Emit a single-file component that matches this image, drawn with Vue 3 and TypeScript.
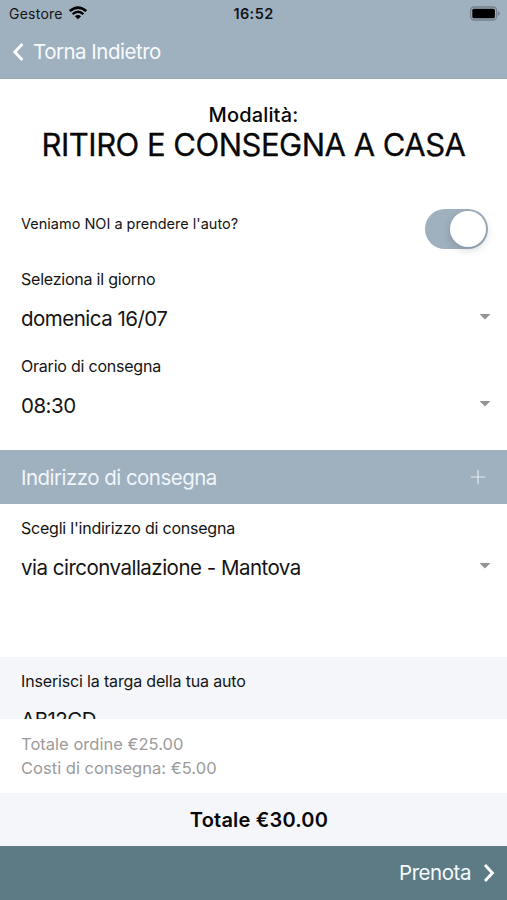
<script setup lang="ts">
import { ref } from 'vue'

interface SelectField {
  id: string
  label: string
  value: string
}

const pickup = ref(true)
const schedule: SelectField[] = [
  { id: 'day', label: 'Seleziona il giorno', value: 'domenica 16/07' },
  { id: 'time', label: 'Orario di consegna', value: '08:30' },
]
const address: SelectField = {
  id: 'address',
  label: "Scegli l'indirizzo di consegna",
  value: 'via circonvallazione - Mantova',
}
const plate = 'AB12CD'
</script>

<template>
  <div class="screen">
    <header class="header">
      <div class="status">
        <div class="carrier">
          <span class="carrier-name">Gestore</span>
          <svg class="wifi" viewBox="0 0 18 14" aria-hidden="true">
            <path d="M.8 5.1Q9-2 17.2 5.1" fill="none" stroke="#000" stroke-width="2.6" />
            <path d="M3.6 8.1Q9 3.5 14.4 8.1" fill="none" stroke="#000" stroke-width="2.3" />
            <path d="M5.9 10.2Q9 7.7 12.1 10.2L9 13.3Z" />
          </svg>
        </div>
        <span class="clock">16:52</span>
        <svg class="battery" viewBox="0 0 31 16" aria-hidden="true">
          <rect x="1.6" y="1" width="26" height="13" rx="3.5" fill="none" stroke="#73808b" stroke-width="1.3" />
          <rect x="3.3" y="2.7" width="22.6" height="9.6" rx="1.6" />
          <path d="M29 5.3q1.8.8 1.8 2.2t-1.8 2.2z" fill="#73808b" />
        </svg>
      </div>
      <button class="back" type="button">
        <svg class="back-icon" viewBox="0 0 12 20" aria-hidden="true">
          <path d="M10.4 2 2.8 10 10.4 18" fill="none" stroke="#fff" stroke-width="2.9" />
        </svg>
        <span class="back-text">Torna Indietro</span>
      </button>
    </header>

    <main class="content">
      <div class="mode">
        <div class="mode-label">Modalità:</div>
        <h1 class="mode-name">RITIRO E CONSEGNA A CASA</h1>
      </div>

      <div class="toggle-row">
        <span class="question">Veniamo NOI a prendere l'auto?</span>
        <button
          class="toggle"
          :class="{ on: pickup }"
          type="button"
          role="switch"
          :aria-checked="pickup"
          @click="pickup = !pickup"
        >
          <span class="knob"></span>
        </button>
      </div>

      <div v-for="f in schedule" :key="f.id" class="field">
        <div class="label">{{ f.label }}</div>
        <div class="value-row">
          <span class="value">{{ f.value }}</span>
          <span class="caret"></span>
        </div>
      </div>

      <div class="section-bar">
        <span class="section-text">Indirizzo di consegna</span>
        <svg class="plus" viewBox="0 0 16 16" aria-hidden="true">
          <path d="M8 .8V15.2M.8 8H15.2" stroke="#e0eaf1" stroke-width="1.2" />
        </svg>
      </div>

      <div class="field address-field">
        <div class="label">{{ address.label }}</div>
        <div class="value-row">
          <span class="value">{{ address.value }}</span>
          <span class="caret"></span>
        </div>
      </div>

      <div class="plate">
        <div class="label plate-label">Inserisci la targa della tua auto</div>
        <div class="value plate-value">{{ plate }}</div>
      </div>
    </main>

    <footer class="footer">
      <div class="costs">
        <div class="order">Totale ordine €25.00</div>
        <div class="delivery">Costi di consegna: €5.00</div>
      </div>
      <div class="total"><span class="total-text">Totale €30.00</span></div>
      <button class="book" type="button">
        <span class="book-text">Prenota</span>
        <svg class="book-icon" viewBox="0 0 12 20" aria-hidden="true">
          <path d="M2 2 9.4 10 2 18" fill="none" stroke="#fff" stroke-width="2.9" />
        </svg>
      </button>
    </footer>
  </div>
</template>

<style>
body {
  margin: 0;
  background: #fff;
}
</style>

<style scoped>
.screen {
  display: flex;
  flex-direction: column;
  width: 507px;
  height: 900px;
  overflow: hidden;
  background: #fff;
  color: #141414;
  font-family: Inter, 'Liberation Sans', sans-serif;
  white-space: nowrap;
}
button {
  padding: 0;
  border: 0;
  background: none;
  color: inherit;
  font: inherit;
}
svg {
  display: block;
  flex: none;
}
.header {
  box-sizing: border-box;
  flex: none;
  height: 79px;
  background: #9fb0bf;
  border-bottom: 1px solid #95a5b0;
}
.status {
  display: grid;
  grid-template-columns: 1fr auto 1fr;
  align-items: center;
  height: 27px;
  padding: 0 7px 0 9px;
}
.carrier {
  display: flex;
  align-items: center;
  gap: 6px;
  font-size: 14px;
  letter-spacing: 0.25px;
}
.wifi {
  width: 18px;
  height: 14px;
  margin-top: -1px;
}
.clock {
  color: #10161b;
  font-size: 14.5px;
  font-weight: 600;
  letter-spacing: 0.4px;
  margin-right: 2px;
}
.battery {
  width: 31px;
  height: 16px;
  justify-self: end;
}
.back {
  display: flex;
  align-items: center;
  height: 50px;
  padding-left: 12px;
  gap: 9px;
  color: #f8fbfd;
  font-size: 20.5px;
  letter-spacing: -0.5px;
}
.back-text,
.book-text {
  padding-bottom: 1px;
}
.back-icon,
.book-icon {
  width: 12px;
  height: 20px;
}
.content {
  flex: 1;
  min-height: 0;
  overflow: hidden;
}
.mode {
  box-sizing: border-box;
  height: 142px;
  padding-top: 23px;
  text-align: center;
  color: #080808;
}
.mode-label {
  font-size: 20px;
  font-weight: 500;
  line-height: 26px;
  letter-spacing: 0.15px;
}
.mode-name {
  margin: 0;
  font-size: 31px;
  font-weight: 400;
  line-height: 34px;
  letter-spacing: -0.5px;
  -webkit-text-stroke: 0.3px #080808;
}
.toggle-row {
  display: flex;
  justify-content: space-between;
  height: 25px;
  padding: 0 19px 0 21px;
}
.question {
  margin-top: -7px;
  font-size: 14.5px;
  line-height: 20px;
}
.toggle {
  box-sizing: border-box;
  display: flex;
  width: 63px;
  height: 40px;
  margin-top: -12px;
  padding: 2px;
  border-radius: 20px;
  background: #ccd2d7;
}
.toggle.on {
  justify-content: flex-end;
  background: #9fb0bf;
}
.knob {
  width: 36px;
  height: 36px;
  border-radius: 50%;
  background: #fff;
  box-shadow: 0 3px 8px rgba(0, 0, 0, 0.17);
}
.field {
  box-sizing: border-box;
  height: 87px;
  padding: 23px 16px 0 21px;
}
.label {
  font-size: 16px;
  line-height: 20px;
  letter-spacing: -0.22px;
}
.value-row {
  display: flex;
  align-items: center;
  justify-content: space-between;
  height: 30px;
  margin-top: 15px;
}
.value {
  font-size: 20.5px;
  line-height: 30px;
  letter-spacing: -0.51px;
}
.caret {
  width: 12px;
  height: 6px;
  margin-top: -5px;
  background: #949494;
  clip-path: polygon(0 0, 100% 0, 50% 100%);
}
.section-bar {
  display: flex;
  align-items: center;
  justify-content: space-between;
  height: 54px;
  margin-top: 30px;
  padding: 0 21px;
  background: #9fb0bf;
  color: #f0f6fb;
  font-size: 20.5px;
  letter-spacing: -0.53px;
}
.plus {
  width: 16px;
  height: 16px;
}
.address-field {
  height: 153px;
  padding-top: 14px;
}
.plate {
  box-sizing: border-box;
  height: 90px;
  padding: 14px 21px 0;
  background: #f4f6fa;
}
.plate-label {
  letter-spacing: -0.16px;
}
.plate-value {
  margin-top: 14px;
}
.footer {
  flex: none;
  height: 181px;
  background: #fff;
}
.costs {
  box-sizing: border-box;
  height: 74px;
  padding: 13px 21px 0;
  color: #9b9b9b;
  font-size: 16.5px;
  line-height: 24px;
  letter-spacing: 0.02px;
}
.total {
  display: flex;
  align-items: center;
  justify-content: center;
  height: 53px;
  background: #f4f6fa;
  color: #080808;
  font-size: 20px;
  font-weight: 600;
  padding-left: 11px;
  letter-spacing: 0.2px;
}
.book {
  display: flex;
  align-items: center;
  justify-content: flex-end;
  gap: 12px;
  width: 100%;
  height: 54px;
  padding-right: 12px;
  background: #5d7b85;
  color: #f5fafc;
  font-size: 20.5px;
  letter-spacing: -0.45px;
}
</style>
